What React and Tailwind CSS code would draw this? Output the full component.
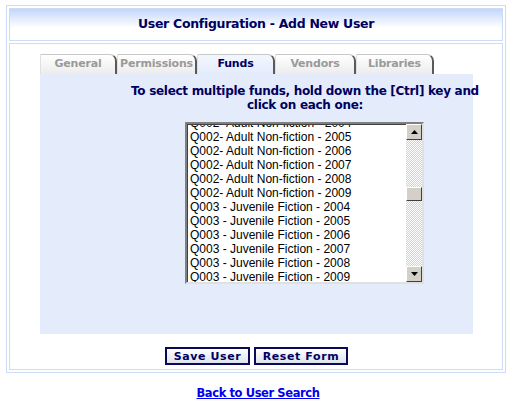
const tabs = [
  { label: 'General', w: 'w-[77px]' },
  { label: 'Permissions', w: 'w-[80px]' },
  { label: 'Funds', w: 'w-[78px]', active: true },
  { label: 'Vendors', w: 'w-[81px]' },
  { label: 'Libraries', w: 'w-[78px]' },
]

const funds = [
  'Q002- Adult Non-fiction - 2004',
  'Q002- Adult Non-fiction - 2005',
  'Q002- Adult Non-fiction - 2006',
  'Q002- Adult Non-fiction - 2007',
  'Q002- Adult Non-fiction - 2008',
  'Q002- Adult Non-fiction - 2009',
  'Q003 - Juvenile Fiction - 2004',
  'Q003 - Juvenile Fiction - 2005',
  'Q003 - Juvenile Fiction - 2006',
  'Q003 - Juvenile Fiction - 2007',
  'Q003 - Juvenile Fiction - 2008',
  'Q003 - Juvenile Fiction - 2009',
]

function ScrollButton({ up }) {
  return (
    <div className="w-[16px] h-[16px] bg-[#d4d0c8] border border-t-white border-l-white border-r-[#404040] border-b-[#404040] flex items-center justify-center">
      <svg width="7" height="4" viewBox="0 0 7 4">
        {up ? <path d="M3.5 0 L7 4 L0 4 Z" fill="#000" /> : <path d="M0 0 L7 0 L3.5 4 Z" fill="#000" />}
      </svg>
    </div>
  )
}

export default function App() {
  return (
    <div className="w-[516px] h-[406px] bg-white font-['DejaVu_Sans',sans-serif] overflow-hidden">
      <div className="mx-[6px] mt-[5px] w-[500px] border border-[#cadcf8] p-[2px] flex flex-col gap-[2px]">
        {/* Header */}
        <div className="h-[33px] border border-[#cadcf8] bg-gradient-to-b from-[#c3d6fb] via-white via-60% to-white flex items-center justify-center">
          <span className="text-[12.5px] font-bold text-[#00005e] tracking-[-0.3px]">User Configuration - Add New User</span>
        </div>

        {/* Body */}
        <div className="h-[327px] border border-[#cadcf8] pt-[10px] pl-[30px] flex flex-col">
          <div className="flex h-[20px]">
            {tabs.map(t => (
              <div
                key={t.label}
                className={`${t.w} h-[20px] flex items-center justify-center text-[11px] font-bold rounded-tr-[7px] border-t border-l border-r-2 border-t-[#c8c8c8] border-l-[#e0e0e0] border-r-[#5a5a5a] tracking-[-0.2px] ${
                  t.active
                    ? 'bg-gradient-to-b from-[#f2f6fe] to-[#e4ecfc] text-[#00005e]'
                    : 'bg-gradient-to-b from-white to-[#ececec] text-[#9a9a9a]'
                }`}
              >
                {t.label}
              </div>
            ))}
          </div>

          <div className="w-[433px] h-[260px] bg-[#e4ecfc] pt-[10px]">
            <div className="ml-[90px] w-[350px] text-center text-[12px] leading-[14px] font-bold text-[#00005e] whitespace-nowrap tracking-[-0.3px]">
              <div>To select multiple funds, hold down the [Ctrl] key and</div>
              <div>click on each one:</div>
            </div>

            <div className="ml-[145px] mt-[10px] w-[239px] h-[162px] bg-white border-2 border-t-[#808080] border-l-[#808080] border-r-[#e0e0e0] border-b-[#e0e0e0] flex">
              <div className="flex-1 overflow-hidden border-t border-l border-t-[#404040] border-l-[#404040]">
                <div className="-mt-[9px] pl-[2px] font-['Liberation_Sans',Arial,sans-serif] text-[12px] leading-[14px] text-black">
                  {funds.map(f => (
                    <div key={f} className="h-[14px] whitespace-nowrap">{f}</div>
                  ))}
                </div>
              </div>
              <div className="w-[16px] flex flex-col bg-[repeating-conic-gradient(#d4d0c8_0_25%,#ffffff_0_50%)] bg-[length:2px_2px]">
                <ScrollButton up />
                <div className="h-[47px]" />
                <div className="w-[16px] h-[14px] bg-[#d4d0c8] border border-t-white border-l-white border-r-[#404040] border-b-[#404040]" />
                <div className="flex-1" />
                <ScrollButton />
              </div>
            </div>
          </div>

          <div className="w-[433px] mt-[13px] flex justify-center gap-[4px]">
            <button className="w-[85px] h-[18px] border-2 border-[#0a0a5a] bg-gradient-to-b from-white to-[#dfe3ef] text-[11px] font-bold text-[#00005e] tracking-[0.6px] leading-none">
              Save User
            </button>
            <button className="w-[94px] h-[18px] border-2 border-[#0a0a5a] bg-gradient-to-b from-white to-[#dfe3ef] text-[11px] font-bold text-[#00005e] tracking-[0.6px] leading-none">
              Reset Form
            </button>
          </div>
        </div>
      </div>

      <div className="mt-[12px] flex justify-center">
        <a href="#" className="text-[11.5px] font-bold text-[#0000ee] underline tracking-[-0.4px]">Back to User Search</a>
      </div>
    </div>
  )
}
